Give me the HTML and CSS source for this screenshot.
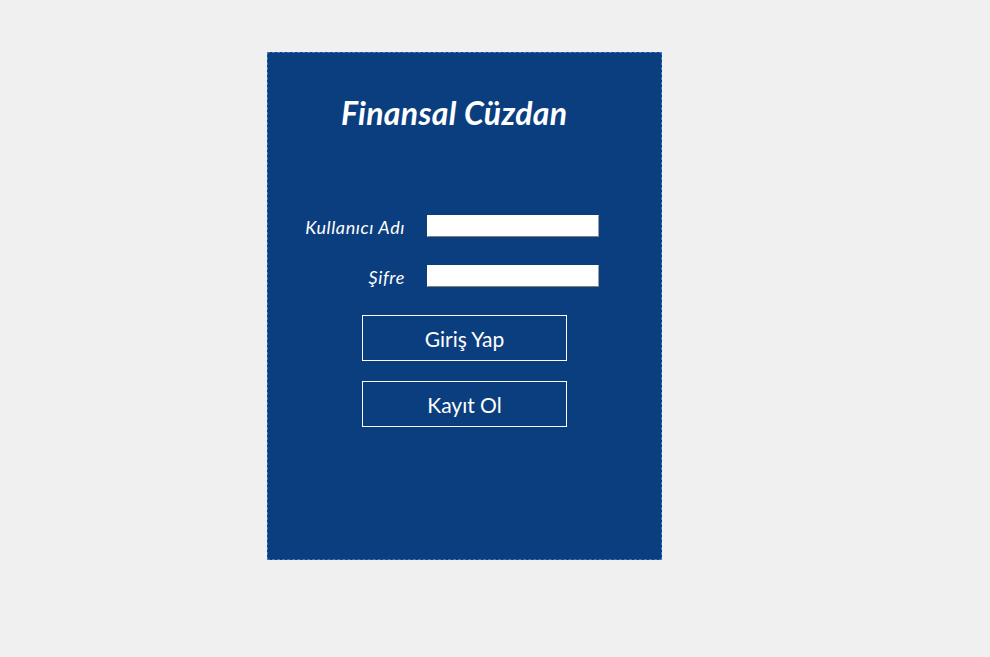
FILE: index.html
```html
<!DOCTYPE html>
<html lang="tr">
<head>
<meta charset="utf-8">
<title>Finansal Cüzdan</title>
<link rel="stylesheet" href="styles.css">
</head>
<body>
<div class="panel">
  <h1 class="title">Finansal Cüzdan</h1>
  <div class="form">
    <label class="label" for="user">Kullanıcı Adı</label>
    <input class="field" id="user" type="text">
    <label class="label" for="pass">Şifre</label>
    <input class="field" id="pass" type="password">
  </div>
  <div class="actions">
    <button class="btn">Giriş Yap</button>
    <button class="btn">Kayıt Ol</button>
  </div>
</div>
</body>
</html>
```
FILE: styles.css
```css
html, body {
  margin: 0;
  padding: 0;
  background: #f0f0f0;
}
body {
  font-family: Lato, "Open Sans", sans-serif;
  padding: 52px 0 0 267px;
}
.panel {
  box-sizing: border-box;
  width: 395px;
  height: 508px;
  background: #0b3e7e;
  border: 1px dashed #3d78c8;
  color: #ffffff;
}
.title {
  margin: 0;
  padding: 42px 0 0 73px;
  font-size: 32px;
  font-weight: 700;
  font-style: italic;
  line-height: 36px;
  letter-spacing: 0.3px;
}
.form {
  display: grid;
  grid-template-columns: 137px 172px;
  column-gap: 22px;
  row-gap: 28px;
  margin-top: 84px;
  align-items: center;
}
.label {
  justify-self: end;
  font-style: italic;
  font-size: 18px;
  letter-spacing: 0.6px;
  line-height: 22px;
  position: relative;
  top: 1px;
}
.field {
  box-sizing: border-box;
  width: 172px;
  height: 22px;
  margin: 0;
  padding: 0 3px;
  background: #ffffff;
  border: 1px solid #ffffff;
  border-right-color: #a0a0a0;
  border-bottom-color: #808080;
  border-radius: 1px;
}
.actions {
  display: flex;
  flex-direction: column;
  gap: 20px;
  margin: 28px 0 0 94px;
}
.btn {
  box-sizing: border-box;
  width: 205px;
  height: 46px;
  background: transparent;
  border: 1px solid #ffffff;
  color: #ffffff;
  font-family: Lato, "Open Sans", sans-serif;
  font-size: 21px;
  padding: 0;
}
```
